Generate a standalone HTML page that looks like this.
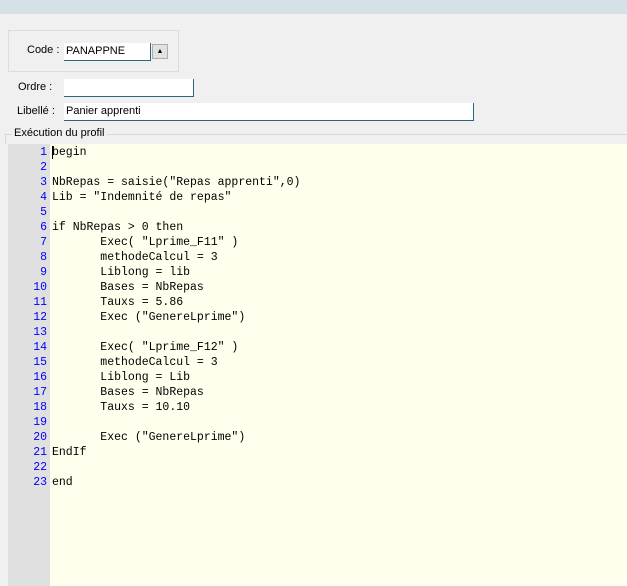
<!DOCTYPE html><html><head><style>
body{margin:0;width:627px;height:586px;background:#f0f0f0;position:relative;overflow:hidden;font-family:"Liberation Sans",sans-serif;font-size:12px;color:#000}
.a{position:absolute}
.in{position:absolute;background:#fff;border-right:1px solid #2b6580;border-bottom:1px solid #2b6580;height:16px;line-height:16px;padding-left:2px;font-size:11px;box-sizing:border-box}
pre{margin:0;font-family:"Liberation Mono",monospace;font-size:11.5px;line-height:15px}
</style></head><body>
<div class="a" style="left:0;top:0;width:627px;height:14px;background:#d6e1e7"></div>
<div class="a" style="left:8px;top:30px;width:169px;height:40px;border:1px solid #dcdcdc"></div>
<div class="a" style="left:27px;top:44px;font-size:11px">Code :</div>
<div class="in" style="left:64px;top:43px;width:87px;height:18px">PANAPPNE</div>
<div class="a" style="left:152px;top:44px;width:16px;height:15px;background:#e1e1e1;border:1px solid #adadad;box-sizing:border-box;font-size:7px;text-align:center;line-height:13px">▲</div>
<div class="a" style="left:18px;top:81px;font-size:11px">Ordre :</div>
<div class="in" style="left:64px;top:79px;width:130px;height:18px"></div>
<div class="a" style="left:17px;top:105px;font-size:11px">Libellé :</div>
<div class="in" style="left:64px;top:103px;width:410px;height:18px">Panier apprenti</div>
<div class="a" style="left:5px;top:134px;width:622px;height:1px;background:#d8d8d8"></div>
<div class="a" style="left:5px;top:134px;width:1px;height:10px;background:#d8d8d8"></div>
<div class="a" style="left:12px;top:127px;font-size:11px;background:#f0f0f0;padding:0 2px">Exécution du profil</div>
<div class="a" style="left:8px;top:144px;width:619px;height:442px;background:#ffffee"></div>
<div class="a" style="left:8px;top:144px;width:42px;height:442px;background:#e0e0e0"></div>
<pre class="a" style="left:8px;top:145px;width:39px;text-align:right;color:#0000ff">1
2
3
4
5
6
7
8
9
10
11
12
13
14
15
16
17
18
19
20
21
22
23</pre>
<div class="a" style="left:52px;top:146px;width:1px;height:13px;background:#000"></div>
<pre class="a" style="left:52px;top:145px">begin

NbRepas = saisie("Repas apprenti",0)
Lib = "Indemnité de repas"

if NbRepas &gt; 0 then
       Exec( "Lprime_F11" )
       methodeCalcul = 3
       Liblong = lib
       Bases = NbRepas
       Tauxs = 5.86
       Exec ("GenereLprime")

       Exec( "Lprime_F12" )
       methodeCalcul = 3
       Liblong = Lib
       Bases = NbRepas
       Tauxs = 10.10

       Exec ("GenereLprime")
EndIf

end</pre>
</body></html>
